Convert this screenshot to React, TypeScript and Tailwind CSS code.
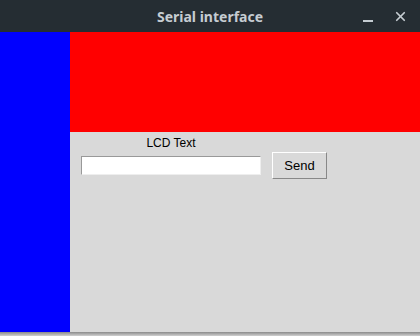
import { X } from "lucide-react";

export default function App() {
    return (
        <div className="w-[420px] h-[336px] bg-[#d9d9d9] flex flex-col overflow-hidden">
            {/* title bar */}
            <div className="h-8 shrink-0 bg-[#252d33] flex items-center relative">
                <span className="flex-1 text-center text-[14px] font-bold text-[#c5ccd2] font-['Noto_Sans',sans-serif]">
                    Serial interface
                </span>
                <div className="absolute right-[12px] top-0 h-8 flex items-center gap-[20px]">
                    <div className="w-[10px] h-[2px] bg-[#c5ccd2] mt-[10px]" />
                    <X size={15} strokeWidth={2.75} className="text-[#c5ccd2]" />
                </div>
            </div>

            <div className="flex flex-1 min-h-0">
                <div className="w-[70px] bg-[#0000ff]" />
                <div className="flex-1 flex flex-col">
                    <div className="h-[100px] bg-[#ff0000]" />
                    <div className="pl-[11px] pt-[3px] font-['Liberation_Sans',sans-serif] text-[12px] text-black">
                        <div className="w-[180px] text-center leading-[16px]">LCD Text</div>
                        <div className="flex items-start gap-[11px] mt-[1px]">
                            <input
                                className="mt-[4px] w-[180px] h-[19px] bg-white border border-t-[#999999] border-l-[#999999] border-b-[#eeeeee] border-r-[#eeeeee] outline-none"
                                defaultValue=""
                            />
                            <button className="w-[55px] h-[27px] bg-[#d9d9d9] border border-t-white border-l-white border-b-[#888888] border-r-[#888888] text-[13px]">
                                Send
                            </button>
                        </div>
                    </div>
                </div>
            </div>

            {/* window shadow */}
            <div className="h-[4px] shrink-0 bg-gradient-to-b from-[#8a8a8a] to-[#d0d0d0]" />
        </div>
    );
}
